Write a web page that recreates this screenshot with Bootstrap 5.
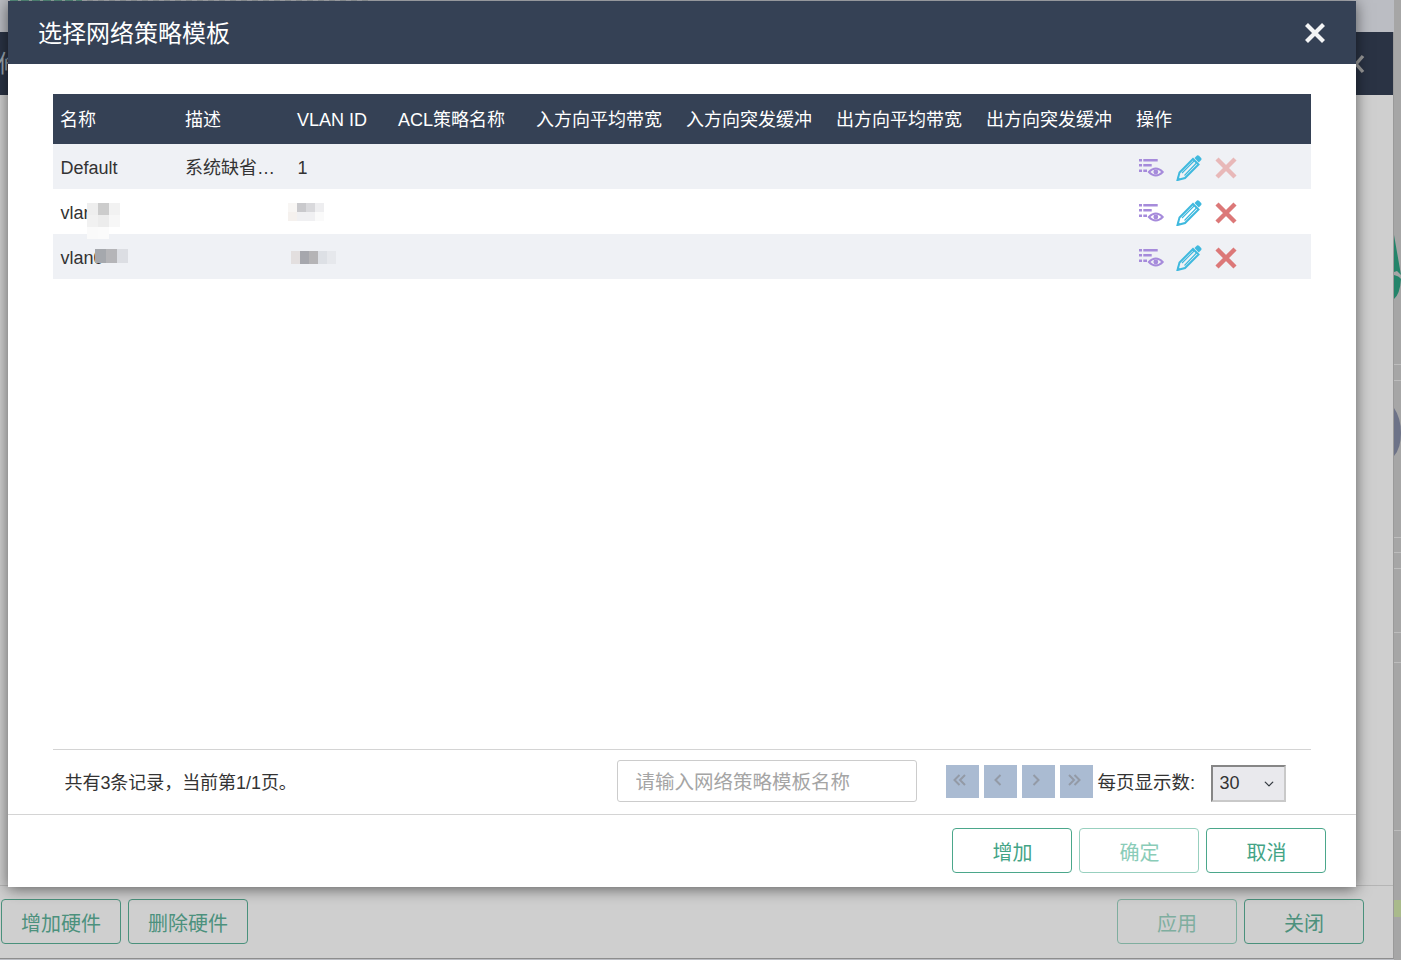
<!doctype html>
<html lang="zh">
<head>
<meta charset="utf-8">
<title>选择网络策略模板</title>
<link href="https://cdn.jsdelivr.net/npm/bootstrap@5.3.0/dist/css/bootstrap.min.css" rel="stylesheet">
<style>
html,body{height:100%}
body{font-family:"Liberation Sans","Noto Sans CJK SC",sans-serif;background:#bbbdc3;overflow:hidden;position:relative;width:1401px;height:960px;color:#333}
.top-trace{position:absolute;left:10px;top:0;height:1px;width:360px;background:repeating-linear-gradient(90deg,#a3a9ad 0 6px,transparent 6px 11px)}
.top-trace-g{position:absolute;left:10px;top:0;height:1px;width:72px;background:repeating-linear-gradient(90deg,#5c9a87 0 8px,#a9bdb7 8px 11px)}
.side-layer{position:absolute;left:1394px;top:0;width:7px;height:960px;background:#a6a6a6;overflow:hidden}
.side-line{position:absolute;left:0;width:7px;height:1px;background:#bdbdbd}
.side-shape{position:absolute}
.back-win{position:absolute;left:-10px;top:32px;width:1404px;height:927px;background:#cfcfcf;display:flex;flex-direction:column;border-right:1px solid #9a9a9a;border-bottom:1px solid #8e8e8e}
.back-head{height:63px;background:#2a3344;color:#9aa5ae;font-size:24px;display:flex;align-items:center;justify-content:space-between;padding:0 28px 0 8px;flex:none}
.back-body{flex:1}
.back-foot{height:73px;border-top:1px solid #b5b5b5;flex:none;display:flex;justify-content:space-between;padding:13px 29px 0 11px}
.back-group{display:flex;gap:7px}
.back-btn{width:120px;height:45px;border:1px solid #4a917c;border-radius:4px;background:transparent;color:#4c917d;font-size:20px;padding:4px 0 0}
.back-btn.off{border-color:#7fae9f;color:#7fae9f}
.dlg{position:absolute;left:8px;top:1px;width:1348px;height:886px;background:#fff;box-shadow:0 2px 14px rgba(0,0,0,.55);display:flex;flex-direction:column}
.dlg-head{height:63px;background:#354155;color:#fff;display:flex;align-items:center;justify-content:space-between;padding:0 30px 0 30px;flex:none}
.dlg-title{font-size:24px;font-weight:400;margin:0;padding-top:3px}
.dlg-main{flex:1;padding:30px 45px 0;display:flex;flex-direction:column;min-height:0}
.tbl-box{flex:1}
.tpl-table{table-layout:fixed;width:1258px;margin:0;font-size:18px;--bs-table-bg:transparent;color:#333}
.tpl-table th,.tpl-table td{padding:0 7px;border:0;vertical-align:middle;white-space:nowrap;font-weight:400;position:relative}
.tpl-table thead th{height:50px;background:#354155;color:#fff;padding-top:2px}
.tpl-table tbody td{height:45px;color:#333;padding:4px 7px 0 7.5px}
.tpl-table tbody td.act-cell{padding:3px 7px 0}
.tpl-table tbody td.cut{overflow:hidden;text-overflow:ellipsis;padding-left:7px}
.tpl-table tbody tr:nth-child(odd) td{background:#eff1f5}
.tpl-table tbody tr:nth-child(2) td{z-index:1}
.mask{position:absolute;display:grid}
.mask i{display:block}
.act{display:flex;align-items:center;gap:12px;padding-left:2px}
.pager-row{height:65px;border-top:1px solid #d4d4d4;display:flex;align-items:center;flex:none;padding:0 0 0 12px}
.rec{font-size:18px;width:552px;color:#333;flex:none;padding-top:3px;margin-left:-.5px;letter-spacing:-.05px}
.tpl-search{width:300px;height:42px;border:1px solid #ccc;border-radius:3px;font-size:19.5px;padding:3px 18px 0;margin-right:29px;flex:none;margin-top:-3px;box-shadow:none}
.tpl-search::placeholder{color:#a5a5a5;opacity:1}
.pg-btns{display:flex;gap:5px;flex:none;margin-top:-2px}
.pg{width:33px;height:33px;background:#aabbd2;border:0;padding:0;display:flex;align-items:center;justify-content:center;border-radius:0}
.pg svg{margin:0 5px 2px 0}
.per{font-size:18.5px;margin-left:5px;width:113px;flex:none;color:#333;white-space:nowrap;padding-top:1px}
.size-sel{width:75px;height:37px;flex:none;border:2px solid;border-color:#868686 #c9c9c9 #c9c9c9 #868686;border-radius:0;background-color:#e9e9ed;font-size:18px;padding:0 0 0 7px;color:#333;box-shadow:none;background-position:right 9px center;background-size:12px 10px;margin-top:3px}
.dlg-foot{height:73px;border-top:1px solid #d4d4d4;display:flex;justify-content:flex-end;gap:7px;padding:13px 30px 0 0;flex:none}
.act-btn{width:120px;height:45px;border:1px solid #4ba78b;border-radius:4px;background:#fff;color:#43a486;font-size:20px;padding:4px 0 0 1px}
.act-btn.off{border-color:#98d0bf;color:#8accb8}
</style>
</head>
<body>
<div class="top-trace"></div><div class="top-trace-g"></div>
<div class="side-layer">
  <div class="side-line" style="top:364px"></div><div class="side-line" style="top:380px"></div>
  <div class="side-line" style="top:537px"></div><div class="side-line" style="top:552px"></div><div class="side-line" style="top:568px"></div>
  <div class="side-line" style="top:632px"></div><div class="side-line" style="top:662px"></div><div class="side-line" style="top:830px"></div>
  <svg class="side-shape" style="left:0;top:235px" width="7" height="65" viewBox="0 0 7 65"><path d="M0 0L7 40L3 36L0 37Z M0 40Q5 41 7 44Q6 59 0 64Z" fill="#24846a"/></svg>
  <svg class="side-shape" style="left:0;top:408px" width="7" height="50" viewBox="0 0 7 50"><path d="M0 0Q7 10 7 25Q7 40 0 48Z" fill="#6d7388"/></svg>
  <div class="side-shape" style="left:0;top:900px;width:7px;height:17px;background:#a9ba8b"></div>
</div>

<div class="back-win">
  <div class="back-head"><span>修改虚拟机</span><svg width="18" height="20" viewBox="0 0 18 20"><path d="M2 2L16 18M16 2L2 18" stroke="#9a9a9a" stroke-width="3.4" fill="none"/></svg></div>
  <div class="back-body"></div>
  <div class="back-foot">
    <div class="back-group"><button class="back-btn">增加硬件</button><button class="back-btn">删除硬件</button></div>
    <div class="back-group"><button class="back-btn off">应用</button><button class="back-btn">关闭</button></div>
  </div>
</div>

<div class="dlg">
  <div class="dlg-head">
    <h5 class="dlg-title">选择网络策略模板</h5>
    <svg width="22" height="22" viewBox="0 0 22 22"><path d="M2.5 2.5L19.5 19.5M19.5 2.5L2.5 19.5" stroke="#f4f5f6" stroke-width="4.2" fill="none"/></svg>
  </div>
  <div class="dlg-main">
    <div class="tbl-box">
      <svg width="0" height="0" class="position-absolute"><defs>
        <g id="ic-list"><g fill="#a68bdb"><rect x="1" y="3" width="3" height="2.5"/><rect x="5.3" y="3" width="14.4" height="2.5"/><rect x="1" y="8" width="3" height="2.5"/><rect x="5.3" y="8" width="8.4" height="2.5"/><rect x="1" y="13.5" width="3" height="2.5"/><rect x="5.3" y="13.5" width="3.7" height="2.5"/><circle cx="17.8" cy="16" r="2.4"/></g><path d="M10.8 16Q17.8 9 24.8 16Q17.8 23 10.8 16Z" fill="none" stroke="#a68bdb" stroke-width="1.8"/></g>
        <g id="ic-pen"><path d="M1.5 25L3.5 17.5L17 4L22.5 9.5L9 23Z" fill="none" stroke="#3fb9de" stroke-width="2"/><path d="M6 18L18.5 5.5M8.5 20.5L20.5 8" fill="none" stroke="#3fb9de" stroke-width="1.2"/><path d="M1 25.5L1.8 21.5L5 24.8Z" fill="#3fb9de"/><path d="M18.5 3L21 .5Q22 0 23 .8L25.2 3Q26 4 25.2 5L22.8 7.5Z" fill="#3fb9de"/></g>
      </defs></svg>
      <table class="table tpl-table">
        <colgroup><col style="width:125px"><col style="width:112px"><col style="width:101px"><col style="width:138px"><col style="width:150px"><col style="width:150px"><col style="width:150px"><col style="width:150px"><col style="width:182px"></colgroup>
        <thead><tr><th>名称</th><th>描述</th><th>VLAN ID</th><th>ACL策略名称</th><th>入方向平均带宽</th><th>入方向突发缓冲</th><th>出方向平均带宽</th><th>出方向突发缓冲</th><th>操作</th></tr></thead>
        <tbody>
          <tr><td>Default</td><td class="cut">系统缺省配置</td><td>1</td><td></td><td></td><td></td><td></td><td></td>
            <td class="act-cell"><div class="act">
              <svg width="26" height="24" viewBox="0 0 26 24"><use href="#ic-list"/></svg>
              <svg width="26" height="26" viewBox="0 0 26 26"><use href="#ic-pen"/></svg>
              <svg width="24" height="24" viewBox="0 0 24 24"><path d="M3 3L21 21M21 3L3 21" stroke="#e8b8b8" stroke-width="4.4" fill="none"/></svg>
            </div></td></tr>
          <tr><td>vlan<div class="mask" style="left:34px;top:14px;grid-template-columns:repeat(3,11px);grid-auto-rows:12px"><i style="background:#eee"></i><i style="background:#ccc"></i><i style="background:#f2f2f2"></i><i style="background:#f1f1f1"></i><i style="background:#ececec"></i><i style="background:#f7f7f7"></i><i style="background:#fafafa"></i><i style="background:#fbfbfb"></i></div></td><td></td><td><div class="mask" style="left:-2px;top:14px;grid-template-columns:repeat(4,9px);grid-auto-rows:9px"><i style="background:#f8f6f4"></i><i style="background:#c9c9cc"></i><i style="background:#d9d9dc"></i><i style="background:#eeeef0"></i><i style="background:#f5f1ee"></i><i style="background:#f0f0f2"></i><i style="background:#f0f0f2"></i><i style="background:#fafafa"></i></div></td><td></td><td></td><td></td><td></td><td></td>
            <td class="act-cell"><div class="act">
              <svg width="26" height="24" viewBox="0 0 26 24"><use href="#ic-list"/></svg>
              <svg width="26" height="26" viewBox="0 0 26 26"><use href="#ic-pen"/></svg>
              <svg width="24" height="24" viewBox="0 0 24 24"><path d="M3 3L21 21M21 3L3 21" stroke="#dc7878" stroke-width="4.4" fill="none"/></svg>
            </div></td></tr>
          <tr><td>vlan0<div class="mask" style="left:42px;top:15px;grid-template-columns:repeat(3,11px);grid-auto-rows:14px"><i style="background:#a5a8ad"></i><i style="background:#b5b5b8"></i><i style="background:#dcdee3"></i></div></td><td></td><td><div class="mask" style="left:1px;top:17px;grid-template-columns:repeat(5,9px);grid-auto-rows:13px"><i style="background:#e3dfdf"></i><i style="background:#a6a7ad"></i><i style="background:#b5b4b6"></i><i style="background:#dde0e5"></i><i style="background:#e6e8ec"></i></div></td><td></td><td></td><td></td><td></td><td></td>
            <td class="act-cell"><div class="act">
              <svg width="26" height="24" viewBox="0 0 26 24"><use href="#ic-list"/></svg>
              <svg width="26" height="26" viewBox="0 0 26 26"><use href="#ic-pen"/></svg>
              <svg width="24" height="24" viewBox="0 0 24 24"><path d="M3 3L21 21M21 3L3 21" stroke="#dc7878" stroke-width="4.4" fill="none"/></svg>
            </div></td></tr>
        </tbody>
      </table>
    </div>
    <div class="pager-row">
      <div class="rec">共有3条记录，当前第1/1页。</div>
      <input class="form-control tpl-search" type="text" placeholder="请输入网络策略模板名称">
      <div class="pg-btns">
        <button class="pg" aria-label="first"><svg width="14" height="14" viewBox="0 0 14 14"><path d="M6.5 2L1.5 7L6.5 12M12 2L7 7L12 12" fill="none" stroke="#939aa6" stroke-width="2"/></svg></button>
        <button class="pg" aria-label="prev"><svg width="14" height="14" viewBox="0 0 14 14"><path d="M9.5 2L4.5 7L9.5 12" fill="none" stroke="#939aa6" stroke-width="2"/></svg></button>
        <button class="pg" aria-label="next"><svg width="14" height="14" viewBox="0 0 14 14"><path d="M4.5 2L9.5 7L4.5 12" fill="none" stroke="#939aa6" stroke-width="2"/></svg></button>
        <button class="pg" aria-label="last"><svg width="14" height="14" viewBox="0 0 14 14"><path d="M2 2L7 7L2 12M7.5 2L12.5 7L7.5 12" fill="none" stroke="#939aa6" stroke-width="2"/></svg></button>
      </div>
      <div class="per">每页显示数:</div>
      <select class="form-select size-sel"><option>30</option></select>
    </div>
  </div>
  <div class="dlg-foot">
    <button class="act-btn">增加</button><button class="act-btn off">确定</button><button class="act-btn">取消</button>
  </div>
</div>
<script src="https://cdn.jsdelivr.net/npm/bootstrap@5.3.0/dist/js/bootstrap.bundle.min.js"></script>
</body>
</html>
